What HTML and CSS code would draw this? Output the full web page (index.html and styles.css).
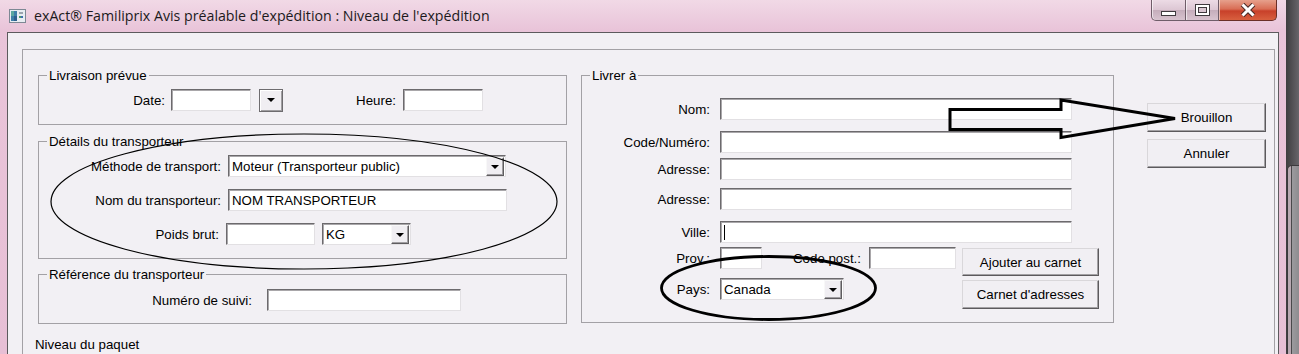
FILE: index.html
```html
<!DOCTYPE html>
<html lang="fr">
<head>
<meta charset="utf-8">
<title>exAct® Familiprix Avis préalable d'expédition</title>
<link rel="stylesheet" href="styles.css">
</head>
<body>
<div class="screen">
  <div class="window">
    <div class="titlebar">
      <svg class="appicon" width="17" height="14" viewBox="0 0 17 14">
        <rect x="0.5" y="0.5" width="16" height="13" fill="#e8edf2" stroke="#7d8894"/>
        <rect x="2" y="2" width="6" height="10" fill="#3f7fa8"/>
        <rect x="2" y="2" width="3" height="5" fill="#5aa7a0"/>
        <rect x="5" y="7" width="3" height="5" fill="#2e5f8e"/>
        <rect x="10" y="3" width="4" height="2" fill="#9aa4ae"/>
        <rect x="10" y="7" width="2" height="2" fill="#4c9a6a"/>
        <rect x="12" y="7" width="2" height="2" fill="#3f6fb0"/>
      </svg>
      <span class="title">exAct® Familiprix Avis préalable d'expédition : Niveau de l'expédition</span>
      <div class="winbtns">
        <span class="wb wb-min"><i class="ico-min"></i></span>
        <span class="wb wb-max"><i class="ico-max"></i></span>
        <span class="wb wb-close">
          <svg width="18" height="14" viewBox="0 0 18 14">
            <path d="M3.5 1.5 L14.5 12.5 M14.5 1.5 L3.5 12.5" stroke="#4a2a26" stroke-width="5" fill="none"/>
            <path d="M3.5 1.5 L14.5 12.5 M14.5 1.5 L3.5 12.5" stroke="#ffffff" stroke-width="3" fill="none"/>
          </svg>
        </span>
      </div>
    </div>
    <div class="client">
      <div class="panel">
        <div class="cols">
          <div class="leftcol">
            <fieldset class="group g-livraison">
              <legend>Livraison prévue</legend>
              <div class="row">
                <span class="lbl lbl-date">Date:</span>
                <span class="field f-date"></span>
                <span class="ddbtn"><i class="tri"></i></span>
                <span class="lbl lbl-heure">Heure:</span>
                <span class="field f-heure"></span>
              </div>
            </fieldset>
            <fieldset class="group g-details">
              <legend>Détails du transporteur</legend>
              <div class="row">
                <span class="lbl lbl-det">Méthode de transport:</span>
                <span class="field combo f-methode"><span class="ctext">Moteur (Transporteur public)</span><span class="dd"><i class="tri"></i></span></span>
              </div>
              <div class="row row-gap12">
                <span class="lbl lbl-det">Nom du transporteur:</span>
                <span class="field f-nom">NOM TRANSPORTEUR</span>
              </div>
              <div class="row row-gap12">
                <span class="lbl lbl-poids">Poids brut:</span>
                <span class="field f-poids"></span>
                <span class="field combo f-kg"><span class="ctext">KG</span><span class="dd"><i class="tri"></i></span></span>
              </div>
            </fieldset>
            <fieldset class="group g-ref">
              <legend>Référence du transporteur</legend>
              <div class="row">
                <span class="lbl lbl-ref">Numéro de suivi:</span>
                <span class="field f-suivi"></span>
              </div>
            </fieldset>
            <div class="niveau">Niveau du paquet</div>
          </div>

          <fieldset class="group g-livrer">
            <legend>Livrer à</legend>
            <div class="row">
              <span class="lbl lbl-r">Nom:</span>
              <span class="field f-wide"></span>
            </div>
            <div class="row r-code">
              <span class="lbl lbl-r">Code/Numéro:</span>
              <span class="field f-wide"></span>
            </div>
            <div class="row r-adr1">
              <span class="lbl lbl-r">Adresse:</span>
              <span class="field f-wide"></span>
            </div>
            <div class="row r-adr2">
              <span class="lbl lbl-r">Adresse:</span>
              <span class="field f-wide"></span>
            </div>
            <div class="row r-ville">
              <span class="lbl lbl-r">Ville:</span>
              <span class="field f-wide"><i class="caret"></i></span>
            </div>
            <div class="lower">
              <div class="lower-fields">
                <div class="row">
                  <span class="lbl lbl-r">Prov.:</span>
                  <span class="field f-prov"></span>
                  <span class="lbl lbl-cp">Code post.:</span>
                  <span class="field f-cp"></span>
                </div>
                <div class="row r-pays">
                  <span class="lbl lbl-r">Pays:</span>
                  <span class="field combo f-pays"><span class="ctext">Canada</span><span class="dd"><i class="tri"></i></span></span>
                </div>
              </div>
              <div class="lower-btns">
                <span class="btn b-ajout">Ajouter au carnet</span>
                <span class="btn b-carnet">Carnet d'adresses</span>
              </div>
            </div>
          </fieldset>

          <div class="actions">
            <span class="btn b-act">Brouillon</span>
            <span class="btn b-act">Annuler</span>
          </div>
        </div>
      </div>
    </div>
  </div>
  <div class="behind"><div class="behind-frame"></div></div>

  <svg class="annot" width="1299" height="354" viewBox="0 0 1299 354">
    <ellipse cx="304" cy="201.5" rx="253" ry="67.5" fill="none" stroke="#000" stroke-width="1.2"/>
    <ellipse cx="768.5" cy="288" rx="107" ry="31.5" fill="none" stroke="#000" stroke-width="2.8"/>
    <polygon points="950,109.5 1061,109.5 1061,100 1175,118.5 1061,137.5 1061,129.5 950,129.5" fill="none" stroke="#000" stroke-width="3" stroke-linejoin="miter"/>
  </svg>
</div>
</body>
</html>
```

FILE: styles.css
```css
* { box-sizing: border-box; }
html, body { margin: 0; padding: 0; }
body {
  width: 1299px;
  height: 354px;
  overflow: hidden;
  background: #4a4a4a;
  font-family: "Liberation Sans", Arial, sans-serif;
  font-size: 13.3px;
  color: #000;
}
.screen {
  position: relative;
  display: flex;
  width: 1299px;
  height: 354px;
}
.window {
  width: 1286px;
  height: 354px;
  flex: none;
  display: flex;
  flex-direction: column;
  background: linear-gradient(to bottom, #f1d9e6 0, #e9c4d9 30px, #e7bfd5 100%);
}
.titlebar {
  height: 32px;
  flex: none;
  display: flex;
  align-items: flex-start;
}
.appicon { margin: 9px 0 0 9px; flex: none; }
.title {
  margin: 6px 0 0 8px;
  font-family: "Open Sans", "Noto Sans", sans-serif;
  font-size: 14.2px;
  color: #1c1a1c;
  white-space: nowrap;
}
.winbtns {
  margin-left: auto;
  margin-right: 9px;
  display: flex;
  height: 21px;
}
.wb {
  height: 21px;
  display: flex;
  align-items: center;
  justify-content: center;
  border: 1px solid #6f5d69;
  border-top: none;
  background: linear-gradient(to bottom, #ecdbe5 0, #dcc6d3 50%, #c5adbb 51%, #d8c3cf 100%);
  box-shadow: inset 1px 0 0 rgba(255,255,255,0.6);
}
.wb-min { width: 35px; border-radius: 0 0 0 5px; }
.wb-max { width: 33px; border-left: none; }
.wb-close {
  width: 58px;
  border-left: none;
  border-radius: 0 0 5px 0;
  border-color: #6a2f27;
  background: linear-gradient(to bottom, #e6a08c 0, #d96e55 45%, #c8402a 55%, #d8603f 100%);
}
.ico-min {
  display: block;
  width: 15px;
  height: 5px;
  margin-top: 7px;
  background: #fff;
  border: 1px solid #3f3a3e;
}
.ico-max {
  display: block;
  width: 15px;
  height: 12px;
  border: 1px solid #3f3a3e;
  background: #d9c6d1;
  box-shadow: inset 0 0 0 2px #fff, inset 0 0 0 3px #3f3a3e;
}

.client {
  flex: 1;
  margin: 0 7px;
  border: 1px solid #5c5a5d;
  border-bottom: none;
  background: #f2f0f4;
  padding: 16px 3px 0 14px;
  display: flex;
  flex-direction: column;
}
.panel {
  flex: 1;
  border: 1px solid #a3a1a5;
  border-bottom: none;
  padding: 18px 0 0 15px;
}
.cols {
  display: flex;
  align-items: flex-start;
}
.leftcol {
  width: 529px;
  flex: none;
  display: flex;
  flex-direction: column;
}

.group {
  margin: 0;
  padding: 0;
  border: 1px solid #a3a1a5;
  min-width: 0;
}
.group > legend {
  padding: 0 2px;
  margin-left: 8px;
  font-size: 13.3px;
  line-height: 15px;
}
.g-livraison { padding: 6px 0 13px 0; }
.g-details { margin-top: 9px; padding: 6px 0 13px 0; }
.g-ref { margin-top: 8px; padding: 7px 0 12px 0; }
.niveau { margin: 13px 0 0 -3px; line-height: 15px; white-space: nowrap; }

.row {
  display: flex;
  align-items: center;
  height: 22px;
}
.row-gap12 { margin-top: 12px; }
.lbl {
  flex: none;
  text-align: right;
  white-space: nowrap;
}
.field {
  flex: none;
  height: 22px;
  background: #fff;
  border: 1px solid;
  border-color: #6c6a6d #e2e0e3 #e2e0e3 #6c6a6d;
  box-shadow: inset 1px 1px 0 #a9a7aa;
  padding-left: 3px;
  display: flex;
  align-items: center;
  white-space: nowrap;
  overflow: hidden;
}
.combo { padding-right: 1px; }
.ctext { flex: 1; }
.dd {
  flex: none;
  width: 18px;
  height: 19px;
  margin-top: 1px;
  background: #f0eef2;
  border: 1px solid;
  border-color: #f8f8f8 #5e5c5f #5e5c5f #f8f8f8;
  box-shadow: inset -1px -1px 0 #a09ea1;
  display: flex;
  align-items: center;
  justify-content: center;
}
.tri {
  display: block;
  width: 0;
  height: 0;
  border-left: 4px solid transparent;
  border-right: 4px solid transparent;
  border-top: 4px solid #000;
}
.ddbtn {
  flex: none;
  width: 24px;
  height: 23px;
  margin-left: 8px;
  background: #f0eef2;
  border: 1px solid #6e6c6f;
  box-shadow: inset 1px 1px 0 #fff, inset -1px -1px 0 #a09ea1;
  display: flex;
  align-items: center;
  justify-content: center;
}

/* Livraison prévue */
.lbl-date { width: 126px; margin-right: 6px; }
.f-date { width: 80px; }
.lbl-heure { width: 113px; margin-right: 7px; }
.f-heure { width: 80px; }

/* Détails */
.lbl-det { width: 182px; margin-right: 7px; }
.f-methode { width: 278px; }
.f-nom { width: 279px; }
.lbl-poids { width: 180px; margin-right: 7px; }
.f-poids { width: 89px; }
.f-kg { width: 89px; margin-left: 7px; }

/* Référence */
.lbl-ref { width: 213px; margin-right: 15px; }
.f-suivi { width: 194px; }

/* Livrer à */
.g-livrer {
  width: 533px;
  flex: none;
  margin-left: 14px;
  padding: 15px 0 13px 0;
}
.lbl-r { width: 128px; margin-right: 10px; }
.f-wide { width: 352px; }
.r-code { margin-top: 11px; }
.r-adr1 { margin-top: 5px; }
.r-adr2 { margin-top: 8px; }
.r-ville { margin-top: 11px; }
.caret {
  display: block;
  width: 1px;
  height: 15px;
  background: #000;
}
.lower {
  display: flex;
  align-items: flex-start;
  margin-top: 4px;
}
.lower-fields { display: flex; flex-direction: column; }
.f-prov { width: 42px; }
.lbl-cp { width: 99px; margin-right: 8px; }
.f-cp { width: 87px; }
.r-pays { margin-top: 9px; }
.f-pays { width: 124px; }
.lower-btns {
  margin-left: 6px;
  margin-top: 1px;
  display: flex;
  flex-direction: column;
  gap: 4px;
}

.btn {
  display: flex;
  align-items: center;
  justify-content: center;
  background: #f1eff3;
  border: 1px solid;
  border-color: #d9d7da #5c5a5d #5c5a5d #d9d7da;
  box-shadow: inset -1px -1px 0 #a3a1a4;
  white-space: nowrap;
}
.b-ajout { width: 137px; height: 28px; }
.b-carnet { width: 137px; height: 29px; }
.actions {
  flex: none;
  width: 119px;
  margin-left: 33px;
  margin-top: 35px;
  display: flex;
  flex-direction: column;
  gap: 7px;
}
.b-act { height: 29px; }

/* background window to the right */
.behind {
  flex: 1;
  height: 354px;
  background: linear-gradient(to right, #3e3d3f, #67656a);
  display: flex;
  flex-direction: column;
  justify-content: flex-end;
}
.behind-frame {
  height: 189px;
  margin-left: 1px;
  border-left: 1px solid #3b393c;
  border-top: 1px solid #3b393c;
  border-top-left-radius: 5px;
  background: linear-gradient(to right, #b9a9b2 0, #b9a9b2 3px, #4a484b 3px, #4a484b 4px, #9c9a9e 4px, #8e8c90 100%);
}

.annot {
  position: absolute;
  left: 0;
  top: 0;
  pointer-events: none;
}
```
